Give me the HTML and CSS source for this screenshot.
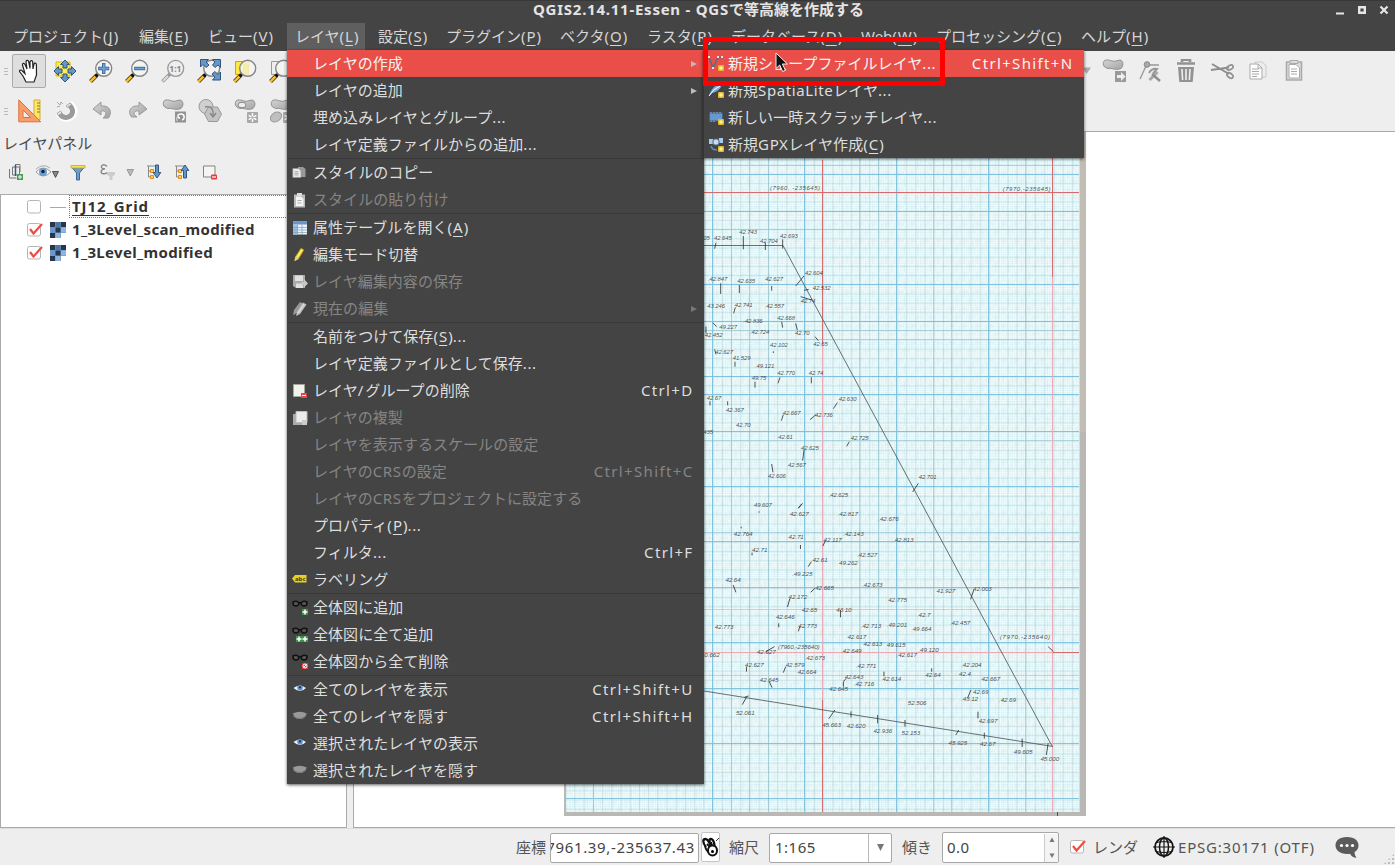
FILE: index.html
```html
<!DOCTYPE html>
<html lang="ja">
<head>
<meta charset="utf-8">
<title>QGIS2.14.11-Essen - QGSで等高線を作成する</title>
<link rel="stylesheet" href="styles.css">
</head>
<body>
<svg class="defs" width="0" height="0">
  <defs>
    <linearGradient id="grey" x1="0" y1="0" x2="1" y2="1"><stop offset="0" stop-color="#d4d4d4"/><stop offset="1" stop-color="#a4a4a4"/></linearGradient>
    <symbol id="lens" viewBox="0 0 24 24">
      <path d="M1.500 22.500L8 16" stroke="#5a4a20" stroke-width="4"/><path d="M1.500 22.500L7 17" stroke="#fbc52c" stroke-width="2.400"/>
      <path d="M6.500 17.500l3-3" stroke="#111" stroke-width="3"/>
      <circle cx="14.700" cy="9.300" r="8" fill="#f4f4f2" fill-opacity=".85" stroke="#858585" stroke-width="1.400"/>
    </symbol>
    <symbol id="blob" viewBox="0 0 24 14"><path d="M1 5C1 0 6 .5 10 2s6-1 9-.8c4 .3 4 7 1 9-3 1.500-7 1-9 .3C8 9.500 6 11 4 9.500 2 8.500 1 7 1 5z" fill="url(#grey)" stroke="#8c8c8c"/></symbol>
    <symbol id="star" viewBox="0 0 10 10"><rect width="10" height="10" rx="1" fill="#a8a8a8"/><path d="M5 1v8M1.500 3l7 4M8.500 3l-7 4" stroke="#fff" stroke-width="1.300"/><circle cx="5" cy="5" r="1.200" fill="#aaa"/></symbol>
    <symbol id="raster" viewBox="0 0 16 16"><path fill="#6d97c6" d="M0 0h16v16H0z"/><path fill="#26364d" d="M0 0h5v5H0zM11 0h5v5h-5zM5.500 5.500h5v5h-5zM0 11h5v5H0z"/><path fill="#4d74a5" d="M5.500 0h5v5h-5z"/><path fill="#8fb5df" d="M11 5.500h5v5h-5zM5.500 11h5v5h-5z"/><path fill="#fff" d="M11 11h5v5h-5z"/></symbol>
    <symbol id="glasses" viewBox="0 0 16 16"><path d="M1 2c-.5 5 5 5 6 1.500C5.500.5 3 1 1 2zM15 2c.5 5-5 5-6 1.500C10.500.5 13 1 15 2zM7 3q1-1 2 0" fill="#555" stroke="#111" stroke-width="1.500"/></symbol>
    <symbol id="eye" viewBox="0 0 16 16"><path d="M1.500 6q6-4.500 12.500 0-6 6-12.500 0z" fill="#f2f2f2"/><circle cx="8" cy="5.800" r="2.800" fill="#5c93cb"/><circle cx="8" cy="5.300" r="1.100" fill="#173050"/></symbol>
    <symbol id="lid" viewBox="0 0 16 16"><path d="M.8 4.500q7-3.500 14 0-2.500 6-7 5.500-4.500.5-7-5.500z" fill="#999"/><path d="M1 7q6 5 13 0" fill="none" stroke="#777"/></symbol>
    <symbol id="page" viewBox="0 0 16 16"><path d="M1 3h7l3 3v8H1z" fill="#ececec" stroke="#999" stroke-width=".7"/><path d="M3 7h5M3 9h5M3 11h5" stroke="#888" stroke-width=".8"/></symbol>
    <symbol id="new" viewBox="0 0 6 6"><rect width="6" height="6" rx="1" fill="#e4b92b"/><circle cx="3" cy="3" r="1.800" fill="#fff4a0"/></symbol>
    <symbol id="check" viewBox="0 0 16 16"><rect x=".5" y="1.500" width="13" height="12.500" rx="2" fill="#fff" stroke="#b5b5b5"/></symbol>
    <symbol id="tick" viewBox="0 0 16 16"><path d="M3 7l3.500 4.500L15 2" fill="none" stroke="#f04a43" stroke-width="2.200"/></symbol>
    <pattern id="fineV" width="1.840" height="50" patternUnits="userSpaceOnUse"><path d="M.5 0V50" stroke="#a9cdd2" stroke-width=".5" opacity=".3"/></pattern>
    <pattern id="fineH" width="50" height="1.840" patternUnits="userSpaceOnUse"><path d="M0 .5H50" stroke="#93e0ee" stroke-width=".5" opacity=".38"/></pattern>
    <pattern id="fiveV" x="703.500" width="9.210" height="50" patternUnits="userSpaceOnUse"><path d="M.5 0V50" stroke="#7aa2aa" stroke-width=".7" opacity=".36"/></pattern>
    <pattern id="fiveH" y="155.500" width="50" height="9.200" patternUnits="userSpaceOnUse"><path d="M0 .5H50" stroke="#6dbbd2" stroke-width=".7" opacity=".4"/></pattern>
    <pattern id="dash" width="13" height="17" patternUnits="userSpaceOnUse"><path d="M2 0v9M7.500 6v11M11 2v7M0 3h7M5 11h8" stroke="#79a9ae" stroke-width=".45" opacity=".22"/></pattern>
  </defs>
</svg>

<header class="titlebar">
  <span class="title"><span class="tl">QGIS2.14.11-Essen - QGS</span>で等高線を作成する</span>
  <svg class="winbtns" width="54" height="14"><path d="M0 12.500h8" stroke="#e6e6e6" stroke-width="2"/><path d="M23.200 6.200h5.600v5.600h-5.600z" fill="none" stroke="#e6e6e6" stroke-width="2.400"/><path d="M44.500 5.500l7 7m0-7l-7 7" stroke="#e6e6e6" stroke-width="2.200"/></svg>
</header>
<nav class="menubar">
  <span>プロジェクト(<u>J</u>)</span><span>編集(<u>E</u>)</span><span>ビュー(<u>V</u>)</span><span class="open">レイヤ(<u>L</u>)</span><span>設定(<u>S</u>)</span><span>プラグイン(<u>P</u>)</span><span>ベクタ(<u>O</u>)</span><span>ラスタ(<u>R</u>)</span><span>データベース(<u>D</u>)</span><span>Web(<u>W</u>)</span><span>プロセッシング(<u>C</u>)</span><span>ヘルプ(<u>H</u>)</span>
</nav>

<section class="toolbars">
  <div class="toolrow">
    <i class="grip"></i>
    <span class="tool pressed"><svg viewBox="0 0 24 24"><path d="M9 23l-3-6-3.300-4.200c-.6-2 1.500-2.400 2.600-.8L8 14.500 5.500 6c-.3-2 1.800-2.300 2.500-.5L10 10 9 3c0-2 2.300-2 2.700-.3L13 9.500V3c.4-1.900 2.500-1.700 2.700 0l.3 7 1-5c.5-1.500 2.400-1.200 2.400.5L19.500 16 17 23z" fill="#fff" stroke="#222" stroke-width="1.200"/></svg></span>
    <span class="tool"><svg viewBox="0 0 24 24"><path d="M3 3h14v14H3z" fill="#ffec4f" stroke="#d9b800"/><path d="M12 1l4.500 4.500H14V9h-4V5.500H7.500zM12 23l4.500-4.500H14V15h-4v3.500H7.500zM1 12l4.500-4.500V10H9v4H5.500v2.500zM23 12l-4.500-4.500V10H15v4h3.500v2.500z" fill="#6796c7" stroke="#31577f"/></svg></span>
    <span class="tool"><svg viewBox="0 0 24 24"><use href="#lens"/><path d="M14.700 4v11M9.200 9.500h11" stroke="#31577f" stroke-width="3.400"/><path d="M14.700 4.500v10M9.700 9.500h10" stroke="#6ea1d6" stroke-width="2"/></svg></span>
    <span class="tool"><svg viewBox="0 0 24 24"><use href="#lens"/><path d="M9.200 9.500h11" stroke="#31577f" stroke-width="3.400"/><path d="M9.700 9.500h10" stroke="#6ea1d6" stroke-width="2"/></svg></span>
    <span class="tool"><svg viewBox="0 0 24 24"><path d="M1.500 22.500L9 15" stroke="#999" stroke-width="3.500"/><path d="M2 22L7 17" stroke="#ddd" stroke-width="1.800"/><circle cx="14.700" cy="9.300" r="8" fill="#eee" stroke="#999" stroke-width="1.300"/><text x="8.300" y="13" class="oneone">1:1</text></svg></span>
    <span class="tool"><svg viewBox="0 0 24 24"><use href="#lens"/><path d="M3.500.5h8L9 3l3 3-3 2.500-3-3-2.500 2.500zM23.500.5v8L21 6l-3 2.500L15.500 6 18 3 15.500.5zM23.500 21h-8l2.500-3-3-3 3-2.500 3 3 2.500-2.500z" fill="#6796c7" stroke="#31577f"/></svg></span>
    <span class="tool"><svg viewBox="0 0 24 24"><path d="M2.500 2.500h13v13h-13z" fill="#ffe93d" stroke="#c8a800"/><use href="#lens"/><path d="M10 4h6v11h-6z" fill="#f3e88d" opacity=".6"/></svg></span>
    <span class="tool"><svg viewBox="0 0 24 24"><path d="M2.500 2.500h13v13h-13z" fill="#eee" stroke="#999"/><use href="#lens"/></svg></span>
    <span class="stretch"></span>
    <svg class="drop" width="10" height="8"><path d="M0 .5h9L4.500 7z" fill="#aaa"/></svg>
    <span class="tool r1"><svg viewBox="0 0 24 24"><use href="#blob" width="23" height="13"/><path d="M13 12h11v11H13z" fill="#999"/><path d="M15 16h4v-3l4.500 4.500L19 22v-3h-4z" fill="#eee"/></svg></span>
    <span class="tool r2"><svg viewBox="0 0 24 24"><path d="M2 20L8.500 6H21" fill="none" stroke="#999" stroke-width="1.300"/><circle cx="9" cy="5.500" r="2.800" fill="#aaa" stroke="#888"/><path d="M11.500 21l8-8" stroke="#a8a8a8" stroke-width="3"/><path d="M14 15l8 7" stroke="#8f8f8f" stroke-width="2.400"/><path d="M11 14q3-5 8-4l-4 4.500" fill="none" stroke="#999" stroke-width="2"/></svg></span>
    <span class="tool r3"><svg viewBox="0 0 24 24"><path d="M8 3V.8h8V3M3 4.500h18" fill="none" stroke="#929292" stroke-width="2.600"/><path d="M4 8h16l-1.300 15H5.300z" fill="#929292"/><path d="M8 10l.6 11M12 10v11M16 10l-.6 11" stroke="#efefef" stroke-width="1.600"/></svg></span>
    <span class="tool r4"><svg viewBox="0 0 24 24"><path d="M1 11l18-2.500M2 5l17 10" stroke="#8d8d8d" stroke-width="1.900"/><ellipse cx="20" cy="8.500" rx="3.400" ry="2.100" transform="rotate(-30 20 8.500)" fill="none" stroke="#929292" stroke-width="1.700"/><ellipse cx="20" cy="16.500" rx="3.400" ry="2.100" transform="rotate(35 20 16.500)" fill="none" stroke="#929292" stroke-width="1.700"/></svg></span>
    <span class="tool r5"><svg viewBox="0 0 24 24"><path d="M9 3h7l4 3.500V18H9z" fill="#eee" stroke="#c8c8c8"/><path d="M4 5h8l4 4v11H4z" fill="#fdfdfd" stroke="#aaa"/><path d="M6 10h7M6 12.500h7M6 15h7M6 17.500h5M12 5v4h4" fill="none" stroke="#aaa"/></svg></span>
    <span class="tool r6"><svg viewBox="0 0 24 24"><path d="M4.500 3h15v18h-15z" fill="#ddd" stroke="#aaa" stroke-width="1.600"/><path d="M7 5.500h7l3.500 3.500v10H7z" fill="#fff" stroke="#aaa"/><path d="M8 1.500h8v3H8z" fill="#ddd" stroke="#aaa"/><path d="M9 10h6M9 12.500h6M9 15h6" stroke="#aaa"/></svg></span>
  </div>
  <div class="toolrow">
    <i class="grip"></i>
    <span class="tool"><svg viewBox="0 0 24 24"><path d="M16 1h6v20h-6z" fill="#ffe76a" stroke="#ceae30"/><path d="M22 4h-3M22 7h-3M22 10h-3M22 13h-3" stroke="#8c7820"/><path d="M.8.8l22 22h-22zM5 11v7.500h7.500z" fill="#fb9d68" fill-rule="evenodd" stroke="#d8713d"/></svg></span>
    <span class="tool"><svg viewBox="0 0 24 24"><path d="M5 14.500c4 8 16 5 15-3.500-.5-2-2.500-4.500-4.500-6.500" fill="none" stroke="#fff" stroke-width="7"/><path d="M5.500 14.500c4 7 14 4 13-3.500-.5-2-2-4-3.500-5.500" fill="none" stroke="#9a9a9a" stroke-width="5"/><path d="M3 14.500l3.500-2.500 1.500 2-3.500 2.500zM12 7l4-3 1.500 1.500-4 3z" fill="#e8e8e8" stroke="#999" stroke-width=".8"/><path d="M3 3l3 3 1-3 2 2M3 8l3-1" fill="none" stroke="#aaa"/></svg></span>
    <span class="tool"><svg viewBox="0 0 24 24"><path d="M3 10l8-7v4c8-1 12 5 7.500 12H13c5-4 3-8-2-7v4z" fill="url(#grey)" stroke="#999"/></svg></span>
    <span class="tool"><svg viewBox="0 0 24 24"><path d="M21 10l-8-7v4C5 6 1 12 5.500 18H11c-5-3-3-7 2-6v4z" fill="url(#grey)" stroke="#999"/></svg></span>
    <span class="tool"><svg viewBox="0 0 24 24"><use href="#blob" width="23" height="13"/><path d="M13 12.500h11v11H13z" fill="#929292"/><path d="M20 21c3-1 3-6-1-6s-4 4-1 4" fill="none" stroke="#fff" stroke-width="1.500"/><path d="M15 22q-1-3 1-6" fill="none" stroke="#ddd"/></svg></span>
    <span class="tool"><svg viewBox="0 0 24 24"><circle cx="8" cy="7.500" r="7" fill="#d0d0d0" stroke="#999"/><path d="M10.500 8h9l4 7-4 7.500h-9L6.500 15z" fill="#c3c3c3" stroke="#999"/><path d="M7 8q9-2 8 9m-3-3l3 4 3-4" fill="none" stroke="#858585" stroke-width="1.300"/></svg></span>
    <span class="tool"><svg viewBox="0 0 24 24"><use href="#blob" width="23" height="13"/><ellipse cx="8" cy="6" rx="4" ry="2.800" fill="#eee" stroke="#888"/><use href="#star" x="13" y="13" width="11" height="11"/></svg></span>
    <span class="tool"><svg viewBox="0 0 24 24"><use href="#blob" width="23" height="13"/><ellipse cx="6" cy="18" rx="6" ry="4.500" transform="rotate(-35 6 18)" fill="#c0c0c0" stroke="#999"/><use href="#star" x="13" y="13" width="11" height="11"/></svg></span>
  </div>
</section>

<main class="work">
  <aside class="panel">
    <h2>レイヤパネル</h2>
    <div class="paneltools">
      <svg width="17" height="18"><path d="M1.500 6v9h7M4.500 4v8h7V4zM7 1.500h5V9" fill="none" stroke="#777"/><path d="M7.500 13V2" stroke="#2d5c86" stroke-width="1.500"/><path d="M9 11h6v6H9z" fill="#4c9a56"/><path d="M12 12v4M10 14h4" stroke="#fff"/></svg>
      <svg class="p2" width="25" height="16"><path d="M1 8q7-8 15 0-8 8-15 0z" fill="#fff" stroke="#999"/><path d="M1 5q7-6 14-1" fill="none" stroke="#aaa"/><circle cx="8" cy="8" r="4" fill="#6c9dce"/><circle cx="8" cy="7.500" r="1.700" fill="#123"/><path d="M17.500 7.500h6L20.500 13.500z" fill="#888" stroke="#555"/></svg>
      <svg class="p3" width="16" height="17"><path d="M2 3.500h12L9.500 9v7H6.500V9z" fill="#6c9dce" stroke="#41698f"/><path d="M1 1.500h14v2.500H1z" fill="#ffe14a" stroke="#b79d21" stroke-width=".7"/></svg>
      <svg class="p4" width="16" height="17"><path d="M7 2.500C4-.5 1 1 1.500 3.500q.8 1.500 3.500 1.300C1 5 0 8.500 2.500 9.500q3 .8 5-1" fill="none" stroke="#888" stroke-width="1.400"/><path d="M7 8h8v3l-2.500 1v4H9.500v-4L7 11z" fill="#ccc"/></svg>
      <svg class="p5" width="9" height="9"><path d="M1 1.500h6.500L4.300 8z" fill="#bbb" stroke="#999"/></svg>
      <svg class="p6" width="16" height="17"><path d="M1 2h9M2.500 2v11H6M2.500 7H6" fill="none" stroke="#888"/><path d="M4.500 5.500h3v3h-3zM4.500 11.500h3v3h-3z" fill="#ffd154" stroke="#dd8d1a"/><path d="M9.500 1h3v7.500h2.300L11 14 7.200 8.500h2.300z" fill="#6696c6" stroke="#31577f"/></svg>
      <svg class="p7" width="16" height="17"><path d="M1 2h9M2.500 2v11H6M2.500 7H6" fill="none" stroke="#888"/><path d="M4.500 5.500h3v3h-3zM4.500 11.500h3v3h-3z" fill="#ffd154" stroke="#dd8d1a"/><path d="M9.500 14h3V6.500h2.300L11 1 7.200 6.500h2.300z" fill="#6696c6" stroke="#31577f"/></svg>
      <svg class="p8" width="16" height="17"><path d="M1.500 2h11.500v11H1.500z" fill="#f4f4f4" stroke="#858575"/><rect x="9" y="10.500" width="6" height="5" rx="1" fill="#e23c43"/><path d="M10 13h4" stroke="#fff" stroke-width="1.200"/></svg>
    </div>
    <ul class="layers">
      <li class="current"><svg width="16" height="16"><use href="#check"/></svg><svg class="sym" width="16" height="16"><path d="M0 8h16v1H0z" fill="#f07aec"/></svg><b>TJ12_Grid</b></li>
      <li><svg width="16" height="16"><use href="#check"/><use href="#tick"/></svg><svg class="sym" width="16" height="16"><use href="#raster"/></svg><b>1_3Level_scan_modified</b></li>
      <li><svg width="16" height="16"><use href="#check"/><use href="#tick"/></svg><svg class="sym" width="16" height="16"><use href="#raster"/></svg><b>1_3Level_modified</b></li>
    </ul>
  </aside>
  <section class="canvas">
    <svg class="scan" width="522" height="684" viewBox="564 132 522 684">
      <path d="M564 132h522v684H564z" fill="#b9b8b4"/>
      <path d="M1080 132h6v300h-6z" fill="#c2bdb4"/>
      <path d="M566 132h513.500v680H566z" fill="#f7fefe"/>
      <g>
        <path d="M566 132h513v680H566z" fill="url(#fineV)"/><path d="M566 132h513v680H566z" fill="url(#fineH)"/>
        <path d="M566 132h513v680H566z" fill="url(#fiveV)"/><path d="M566 132h513v680H566z" fill="url(#fiveH)"/>
        <path d="M566 132h513v680H566z" fill="url(#dash)"/>
      </g>
      <path d="M566 174.500h513M566 211.500h513M566 284.500h513M566 321.500h513M566 376.500h513M566 394.500h513M566 431.500h513M566 486.500h513M566 541.500h513M566 587.500h513M566 642.500h513M566 688.500h513M566 743.500h513M566 798.500h513M712.500 132v680M804.500 132v680M896.500 132v680M988.500 132v680" stroke="#6db9dc" opacity=".8"/>
      <path d="M566 165.500h513M566 229.500h513M566 330.500h513M566 339.500h513M566 440.500h513M566 532.500h513M566 609.500h513M566 675.500h513M731.500 132v680M749.500 132v680M768.500 132v680M859.500 132v680M878.500 132v680M933.500 132v680M951.500 132v680M1025.500 132v680" stroke="#79b3c4" opacity=".45"/>
      <path d="M566 192.500h513M822.500 160v184M1052.500 132v145M1052 652.500h27M822.500 700v112" stroke="#d66b70"/>
      <path d="M566 652.500h486M822.500 344v356M1052.500 277v535M593.500 784v28" stroke="#efabb5"/>
      <path d="M704 245.500h79L1052 746M704 691l349 55.500" fill="none" stroke="#50585a" stroke-width=".85"/>
      <g class="hand" transform="translate(700 160) scale(.33333)">
        <path d="M48 248l-4 18M130 228v40M196 248v22M248 238v28M312 348l-25 30M326 388l-14 3M335 420l-33-10M62 370v32M118 375v24M215 378v14M106 442l-5 18M245 485l3 18M38 488l12 12M287 490l5 20M345 530l10 12M44 568l4 15M105 605v15M220 574v5M165 665v18M240 652l-6 18M334 652v18M30 724v12M83 724v12M250 764l-6 18M348 764l-18 15M412 728l-12 18M312 870l-4 32M448 845l-8 14M215 912l4 25M305 1032l-10 12M655 970l-17 26M18 500v20"/>
        <text x="210" y="90" class="wide">(7960, -235645)</text><text x="908" y="92" class="wide">(7970,-235645)</text>
        <text x="10" y="240">05</text><text x="42" y="240">42.645</text><text x="118" y="222">42.743</text><text x="180" y="250">42.704</text><text x="240" y="234">42.693</text><text x="315" y="346">42.604</text><text x="338" y="390">42.532</text><text x="302" y="428">42.74</text><text x="24" y="362">.42.847</text><text x="112" y="368">42.635</text><text x="196" y="364">42.627</text><text x="22" y="444">43.246</text><text x="104" y="440">42.741</text><text x="194" y="445">.42.557</text><text x="130" y="488">.42.836</text><text x="232" y="480">42.668</text><text x="58" y="506">49.227</text><text x="150" y="522">.42.724</text><text x="285" y="524">42.70</text><text x="14" y="532">42.452</text><text x="340" y="557">42.65</text><text x="210" y="560">42.102</text><text x="46" y="583">42.627</text><text x="98" y="600">41.529</text><text x="165" y="624">.49.121</text><text x="232" y="646">42.770</text><text x="326" y="645">42.74</text><text x="155" y="660">49.75</text><text x="20" y="720">42.67</text><text x="78" y="755">42.367</text><text x="248" y="764">42.667</text><text x="345" y="770">42.736</text><text x="416" y="722">42.630</text><text x="108" y="800">42.70</text><text x="10" y="822">435</text><text x="230" y="837">.42.61</text><text x="452" y="840">42.725</text><text x="303" y="870">42.625</text><text x="264" y="922">42.567</text><text x="204" y="955">42.606</text><text x="656" y="957">42.701</text><text x="386" y="1012">.42.625</text><text x="162" y="1040">49.607</text>
      </g>
      <g class="hand" transform="translate(550 500) scale(.3508 .3333)">
        <path d="M720 10l-12 15M596 34v4M545 80v5M714 135v12M785 122l-7 16M576 158v8M745 185l-9 15M522 255l8 22M755 265l-12 12M684 295l-7 26M828 330v22M652 370v12M712 380l-4 14M1208 270l-9 28M1420 440l15 15M640 440l-25 15M560 500v15M672 500l-7 18M845 535q-12 8-8 25M952 515v14M625 545l8 18M560 592l-12 22M566 588l-12 4M812 630l-17 26M858 634v18M934 645v25M1012 660v20M1165 690l-8 15M1238 698v18M1346 716v25M1420 730l-5 35M1220 635v20M1088 505v10M1200 570l-10 25"/>
        <text x="684" y="48">42.627</text><text x="820" y="48">.42.817</text><text x="936" y="63">.42.676</text><text x="524" y="108">42.764</text><text x="680" y="117">42.71</text><text x="780" y="127">42.117</text><text x="836" y="108">.42.143</text><text x="978" y="126">.42.813</text><text x="576" y="157">42.71</text><text x="875" y="170">.42.527</text><text x="748" y="187">42.61</text><text x="824" y="195">49.262</text><text x="690" y="228">.49.225</text><text x="500" y="245">42.64</text><text x="756" y="270">42.665</text><text x="890" y="260">.42.673</text><text x="1102" y="280">41.927</text><text x="1206" y="274">42.003</text><text x="680" y="298">42.172</text><text x="964" y="307">42.775</text><text x="718" y="335">42.65</text><text x="816" y="337">43.10</text><text x="644" y="358">42.646</text><text x="1046" y="350">.42.7</text><text x="1140" y="376">.42.457</text><text x="470" y="387">42.773</text><text x="708" y="383">42.773</text><text x="886" y="383">.42.713</text><text x="960" y="382">.49.201</text><text x="1034" y="392">49.664</text><text x="1282" y="416" class="wide">(7970,-235640)</text><text x="848" y="418">42.617</text><text x="894" y="437">42.613</text><text x="960" y="440">49.615</text><text x="650" y="448">(7960,-235640)</text><text x="830" y="458">.42.649</text><text x="1050" y="455">.49.120</text><text x="440" y="470">0.662</text><text x="590" y="462">42.627</text><text x="726" y="479">.42.673</text><text x="988" y="472">.42.617</text><text x="556" y="502">42.627</text><text x="672" y="500">42.579</text><text x="706" y="523">42.664</text><text x="872" y="503">.42.771</text><text x="1172" y="500">.42.204</text><text x="1070" y="530">42.64</text><text x="1166" y="528">42.4</text><text x="1230" y="544">42.667</text><text x="598" y="546">42.645</text><text x="840" y="538">42.643</text><text x="948" y="542">42.614</text><text x="866" y="557">.42.716</text><text x="796" y="574">42.645</text><text x="1206" y="583">42.69</text><text x="1172" y="602">.43.12</text><text x="1280" y="606">.42.69</text><text x="1020" y="614">52.506</text><text x="530" y="645">52.061</text><text x="1222" y="670">42.697</text><text x="776" y="680">45.663</text><text x="846" y="684">42.620</text><text x="922" y="700">42.936</text><text x="1002" y="704">52.153</text><text x="1136" y="735">45.925</text><text x="1226" y="738">42.67</text><text x="1322" y="762">49.605</text><text x="1398" y="782">45.000</text>
      </g>
      <path d="M1057.500 812v4" stroke="#8a3940"/>
    </svg>
  </section>
</main>

<footer class="status">
  <label class="s1">座標</label><span class="field coord"><span>7961.39,-235637.43</span></span>
  <span class="mouse"><svg width="17" height="27"><path d="M4 14C0 9 1 6 3.500 6s4 4 5.500 7C6.500 8 7.500 5 9.500 6s3 4 3 8" fill="#fff" stroke="#111" stroke-width="2.300"/><path d="M3 13q1 5 5 7M5 11l3 3M9 9l1 3" fill="none" stroke="#111" stroke-width="1.800"/><ellipse cx="10.500" cy="17.500" rx="4.500" ry="5" fill="#fff" stroke="#111" stroke-width="2"/><circle cx="10.500" cy="18.500" r="1.500"/><path d="M14 8l3-3" stroke="#333"/></svg></span>
  <label class="s2">縮尺</label><span class="field scale"><span>1:165</span><i><svg width="9" height="9"><path d="M1 1h7L4.500 8z" fill="#777"/></svg></i></span>
  <label class="s3">傾き</label><span class="field spin"><span>0.0</span><i><svg width="10" height="22"><path d="M2.500 5h5L5 .5zM2.500 16.500h5L5 21z" fill="#777"/></svg></i></span>
  <svg class="rendercheck" width="16" height="16"><use href="#check"/><use href="#tick"/></svg><label class="s4">レンダ</label>
  <svg class="globe" width="22" height="22" fill="none" stroke="#151515"><circle cx="11" cy="11" r="9" stroke-width="1.800"/><ellipse cx="11" cy="11" rx="4.500" ry="9" stroke-width="1.500"/><path d="M0 11h22M11 0v22M3.500 6.500q7.500-2 15 0M3.500 15.500q7.500 2 15 0" stroke-width="1.200"/></svg>
  <span class="crs">EPSG:30171 (OTF)</span>
  <svg class="bubble" width="24" height="23"><path d="M12 1C4 1 .5 5 .5 9.500S5 18 12 18c1 0 2 0 3-.3q2 4 6.500 4-2-2-2-5.500 4-2.700 4-6.700C23.500 5 20 1 12 1z" fill="#5b5b5b"/><circle cx="6.500" cy="9.500" r="1.600" fill="#fff"/><circle cx="12" cy="9.500" r="1.600" fill="#fff"/><circle cx="17.500" cy="9.500" r="1.600" fill="#fff"/></svg>
  <i class="sizegrip"></i>
</footer>

<div class="menu layermenu">
  <div class="item hot"><i></i><span>レイヤの作成</span><b class="sub"></b></div>
  <div class="item"><i></i><span>レイヤの追加</span><b class="sub"></b></div>
  <div class="item"><i></i><span>埋め込みレイヤとグループ<em>...</em></span></div>
  <div class="item"><i></i><span>レイヤ定義ファイルからの追加<em>...</em></span></div>
  <hr>
  <div class="item"><i><svg viewBox="0 0 16 16"><path d="M6 2h5l2.500 2v8H6z" fill="#999"/><use href="#page" width="13" height="15"/></svg></i><span>スタイルのコピー</span></div>
  <div class="item off"><i><svg viewBox="0 0 16 16"><path d="M2 2.500h11v13H2z" fill="#bbb"/><path d="M4 4.500h5l2.500 2.500v7H4z" fill="#f4f4f4"/><path d="M5 1h5v3H5z" fill="#ddd"/><path d="M5.500 8.500h4M5.500 11h4" stroke="#aaa"/></svg></i><span>スタイルの貼り付け</span></div>
  <hr>
  <div class="item"><i><svg viewBox="0 0 16 16"><path d="M1 1.500h14v13H1z" fill="#eef3f7"/><path d="M1 1.500h14v3H1z" fill="#6597cc"/><path d="M1 4.500h4.500v10H1z" fill="#9dc0e3"/><path d="M1 7.500h14M1 10h14M1 12.500h14M5.500 4.500v10M10 4.500v10" stroke="#7c9dbb" stroke-width=".7"/></svg></i><span>属性テーブルを開く(<u>A</u>)</span></div>
  <div class="item"><i><svg viewBox="0 0 16 16"><path d="M2.500 14l1-4.500L9 1l3 2-5.500 9z" fill="#f0d43c" stroke="#947c17" stroke-width=".6"/><path d="M2.500 14l1-4.500 3 2.500z" fill="#d7d0b0"/><path d="M5.500 10L10 2.500" stroke="#fff6a0"/></svg></i><span>編集モード切替</span></div>
  <div class="item off"><i><svg viewBox="0 0 16 16"><path d="M1 1h12v13H4l-3-2z" fill="#aaa"/><path d="M3 1.500h8v5.500H3zM4 9.500h7V14H4z" fill="#e0e0e0"/><path d="M9 8h3V5l4 4.500-4 4V11H9z" fill="#c8c8c8"/></svg></i><span>レイヤ編集内容の保存</span></div>
  <div class="item off"><i><svg viewBox="0 0 16 16"><path d="M1 14l1-5L8 1l3 1.500L5 12z" fill="#999"/><path d="M4 15l1-4 6-9.500 3.500 2L8 13z" fill="#c1c1c1"/><path d="M6 12l6-9" stroke="#eee" stroke-width=".8"/></svg></i><span>現在の編集</span><b class="sub"></b></div>
  <hr>
  <div class="item"><i></i><span>名前をつけて保存(<u>S</u>)<em>...</em></span></div>
  <div class="item"><i></i><span>レイヤ定義ファイルとして保存<em>...</em></span></div>
  <div class="item"><i><svg viewBox="0 0 16 16"><path d="M1.500 1.500h11v12h-11z" fill="#f2f2ec" stroke="#a5a59a"/><path d="M9 10h6v5H9z" fill="#e7434a"/><path d="M10 12.500h4" stroke="#fff"/></svg></i><span>レイヤ/<span class="sl"></span>グループの削除</span><kbd>Ctrl+D</kbd></div>
  <div class="item off"><i><svg viewBox="0 0 16 16"><path d="M1 4h11v11H1z" fill="#aaa"/><path d="M4 1.500h11v11H4z" fill="#ececec" stroke="#bbb"/><path d="M10 10h5v5h-5z" fill="#ccc"/></svg></i><span>レイヤの複製</span></div>
  <div class="item off"><i></i><span>レイヤを表示するスケールの設定</span></div>
  <div class="item off"><i></i><span>レイヤの<em>CRS</em>の設定</span><kbd>Ctrl+Shift+C</kbd></div>
  <div class="item off"><i></i><span>レイヤの<em>CRS</em>をプロジェクトに設定する</span></div>
  <div class="item"><i></i><span>プロパティ(<u>P</u>)<em>...</em></span></div>
  <div class="item"><i></i><span>フィルタ<em>...</em></span><kbd>Ctrl+F</kbd></div>
  <div class="item"><i><svg viewBox="0 0 16 16"><path d="M0 6.500L3 3h11.500v7.500H3z" fill="#e9cd28"/><text x="3" y="9" class="abc">abc</text></svg></i><span>ラベリング</span></div>
  <hr>
  <div class="item"><i><svg viewBox="0 0 16 16"><use href="#glasses"/><path d="M10 9h6v6h-6z" fill="#3d9449"/><path d="M13 9.500v5M10.500 12h5" stroke="#fff" stroke-width="1.500"/></svg></i><span>全体図に追加</span></div>
  <div class="item"><i><svg viewBox="0 0 16 16"><use href="#glasses"/><path d="M4 9h12v6H4z" fill="#3d9449"/><path d="M13 9.500v5M10.500 12h5M7 9.500v5M4.500 12h5" stroke="#fff" stroke-width="1.500"/></svg></i><span>全体図に全て追加</span></div>
  <div class="item"><i><svg viewBox="0 0 16 16"><use href="#glasses"/><path d="M10 9h6v6h-6z" fill="#e33"/><circle cx="13" cy="12" r="2" fill="none" stroke="#fff"/><path d="M11.500 13.500l3-3" stroke="#fff"/></svg></i><span>全体図から全て削除</span></div>
  <hr>
  <div class="item"><i><svg viewBox="0 0 16 16"><use href="#eye"/></svg></i><span>全てのレイヤを表示</span><kbd>Ctrl+Shift+U</kbd></div>
  <div class="item"><i><svg viewBox="0 0 16 16"><use href="#lid"/></svg></i><span>全てのレイヤを隠す</span><kbd>Ctrl+Shift+H</kbd></div>
  <div class="item"><i><svg viewBox="0 0 16 16"><use href="#eye"/></svg></i><span>選択されたレイヤの表示</span></div>
  <div class="item"><i><svg viewBox="0 0 16 16"><use href="#lid"/></svg></i><span>選択されたレイヤを隠す</span></div>
</div>

<div class="menu submenu">
  <div class="item hot"><i><svg viewBox="0 0 16 16"><path d="M1 1l4 11 5-10.500h5" fill="none" stroke="#5a6d80" stroke-width="1.500"/><path d="M0 0h2v2H0zM4 11h2v2H4zM9 0h2v2H9zM13 0h2v2h-2z" fill="#dbe4ec"/><use href="#new" x="10" y="9" width="6" height="6"/></svg></i><span>新規シェープファイルレイヤ<em>...</em></span><kbd>Ctrl+Shift+N</kbd></div>
  <div class="item"><i><svg viewBox="0 0 16 16"><path d="M1 13C3 6 7 1 14 1c-1 5-5 8-10 9z" fill="#79a9dc"/><path d="M1 13Q5 6 12 3" fill="none" stroke="#fff"/><use href="#new" x="10" y="9" width="6" height="6"/></svg></i><span>新規<em>SpatiaLite</em>レイヤ<em>...</em></span></div>
  <div class="item"><i><svg viewBox="0 0 16 16"><path d="M1.500 3h13v8h-13z" fill="#6998cd" stroke="#3d638d"/><path d="M3 2v1M6 2v1M9 2v1M12 2v1M3 12v-1M6 12v-1" stroke="#9bc2ea"/><use href="#new" x="10" y="9" width="6" height="6"/></svg></i><span>新しい一時スクラッチレイヤ<em>...</em></span></div>
  <div class="item"><i><svg viewBox="0 0 16 16"><path d="M1 2h4v5H1zM11 1h4v5h-4z" fill="#a9cbed"/><rect x="5" y="2" width="6" height="6" rx="2" fill="#cfdae7" stroke="#45698e"/><path d="M3 9q1 4 6 4" fill="none" stroke="#5c8cc1" stroke-width="1.500"/><use href="#new" x="10" y="9" width="6" height="6"/></svg></i><span>新規<em>GPX</em>レイヤ作成(<u>C</u>)</span></div>
</div>

<div class="callout"></div>
<svg class="cursor" width="14" height="21"><path d="M1 1v15.500l3.700-3.500 3 6.500 2.700-1.200-3-6.300h5z" fill="#111" stroke="#eee"/></svg>
</body>
</html>
```
FILE: styles.css
```css
* { box-sizing: border-box; }
body {
  margin: 0; width: 1395px; height: 865px; overflow: hidden;
  display: flex; flex-direction: column; position: relative;
  background: #eee; color: #4a4a4a;
  font: 15px/27px "Noto Sans", "Noto Sans CJK JP", sans-serif;
  white-space: nowrap;
}
svg { display: block; flex: none; }
.defs { position: absolute; }
u { text-underline-offset: 3px; text-decoration-thickness: 1px; margin: 0 1px; }
em { font-style: normal; letter-spacing: .6px; }

.titlebar { height: 23px; background: #444; border-top: 1px solid #383838; display: flex; color: #e4e4e4; }
.title { margin-left: 533px; line-height: 16px; font-weight: 700; }
.tl { letter-spacing: .75px; }
.winbtns { margin-left: auto; margin-right: 5px; }

.menubar {
  height: 28px; background: #444; color: #d6d6d6; padding-left: 5px; display: grid;
  grid-template-columns: 126px 69px 87px 83px 68px 114px 87px 84px 130px 75px 145px auto;
}
.menubar span { padding-left: 8px; line-height: 26px; }
.menubar .open { background: #5f5f5f; width: 78px; }

.toolbars { height: 80px; }
.toolrow { height: 40px; display: flex; align-items: center; padding-left: 4px; overflow: hidden; }
.grip { width: 4px; height: 7px; margin-right: 4px; border-top: 1px solid #bbb; border-bottom: 1px solid #bbb; background: linear-gradient(#eee 2px, #bbb 2px, #bbb 3px, #eee 3px); }
.tool { width: 36px; height: 34px; flex: none; display: flex; align-items: center; justify-content: center; }
.tool svg { width: 24px; height: 24px; }
.pressed { background: #dedede; border: 1px solid #ababab; border-radius: 2px; width: 34px; margin-right: 1px; }
.oneone { font: 700 8.500px "Noto Sans", sans-serif; fill: #888; }
.stretch { width: 783px; }
.drop { margin-right: 10px; }
.r1, .r2, .r3, .r4, .r5, .r6 { width: 24px; }
.r2, .r3, .r4, .r5 { margin-left: 12px; }
.r6 { margin-left: 12px; }

.work { height: 697px; display: flex; }
.panel { width: 347px; display: flex; flex-direction: column; }
.panel h2 { margin: 0; padding-left: 3px; height: 27px; line-height: 25px; font-size: 15px; font-weight: 400; }
.paneltools { height: 36px; display: flex; align-items: center; padding: 0 0 8px 8px; }
.p2 { margin-left: 10px; } .p3 { margin-left: 10px; } .p4 { margin-left: 14px; }
.p5 { margin-left: 10px; } .p6 { margin-left: 11px; } .p7 { margin-left: 12px; } .p8 { margin-left: 12px; }
.layers { flex: 1; margin: 0; padding: 0; list-style: none; background: #fff; border: 1px solid #aaa; }
.layers li { height: 23px; display: flex; align-items: center; padding-left: 26px; }
.sym { margin-left: 7px; }
.layers b { margin-left: 3px; padding-left: 3px; color: #333; line-height: 21px; letter-spacing: .34px; }
.layers .current b { flex: 1; height: 23px; border: 1px dotted #777; border-right: 0; text-decoration: underline; text-underline-offset: 3px; padding-left: 2px; letter-spacing: .95px; line-height: 20px; }
.canvas { margin-left: 6px; flex: 1; background: #fff; border: 1px solid #aaa; border-right: 0; }
.scan { margin-left: 210px; }
.hand { font: italic 18px "Liberation Sans", sans-serif; fill: #3c3c3c; stroke: #333; stroke-width: 2.500; fill-opacity: .9; }
.hand path { fill: none; }
.hand text { stroke: none; letter-spacing: -.3px; }
.hand .wide { letter-spacing: 1.600px; }

.status { height: 37px; display: flex; align-items: center; border-top: 1px solid #ddd; color: #555; }
.s1, .s2, .s3, .s4, .crs { line-height: 26px; padding-bottom: 1px; }
.s1 { margin-left: 516px; width: 34px; }
.field { height: 30px; background: #fff; border: 1px solid #a8a8a8; border-radius: 2px; display: flex; align-items: center; color: #444; margin-top: 1px; }
.coord { width: 149px; justify-content: flex-end; overflow: hidden; padding-right: 3px; }
.coord span { letter-spacing: .65px; }
.mouse { width: 19px; height: 30px; margin-left: 2px; background: #fff; border: 1px solid #c4c4c4; border-radius: 2px; }
.s2 { margin-left: 9px; width: 40px; }
.scale { width: 123px; padding-left: 5px; justify-content: space-between; letter-spacing: .5px; }
.scale i { width: 23px; height: 28px; border-left: 1px solid #bbb; display: flex; align-items: center; justify-content: center; }
.s3 { margin-left: 10px; width: 40px; }
.spin { width: 117px; height: 31px; padding-left: 4px; justify-content: space-between; letter-spacing: .5px; }
.spin i { width: 14px; height: 28px; border-left: 1px solid #ccc; background: #f4f4f4; display: flex; align-items: center; justify-content: center; }
.rendercheck { margin-left: 11px; }
.s4 { margin-left: 7px; width: 60px; }
.crs { margin-left: 3px; width: 157px; letter-spacing: .8px; }
.sizegrip { margin: auto 0 0 auto; width: 12px; height: 12px; background: radial-gradient(circle, #bbb 35%, transparent 40%) 0 0 / 4px 4px; clip-path: polygon(100% 0, 100% 100%, 0 100%); }

.menu { position: absolute; top: 50px; background: #444; color: #dedede; box-shadow: 0 1px 3px rgba(0,0,0,.65); }
.layermenu { left: 287px; width: 417px; }
.submenu { left: 703px; width: 381px; border-left: 1px solid #363636; }
.menu hr { height: 1px; margin: 0; border: 0; background: #393939; }
.item { height: 27px; display: flex; align-items: center; padding: 0 11px 0 5px; }
.item > span { letter-spacing: .05px; }
.submenu .item { padding-left: 4px; }
.item > i { width: 21px; flex: none; }
.item > i svg { width: 16px; height: 16px; }
.submenu .item > i { width: 20px; }
.sl { padding-left: 2px; }
.hot { background: #e94f48; color: #f4f4f4; }
.off { color: #858585; }
.item kbd { margin-left: auto; font: inherit; letter-spacing: 1.350px; margin-right: -.5px; }
.sub { margin-left: auto; margin-right: -4px; border: 3px solid transparent; border-left: 6px solid #bbb; border-right: 0; }
.off .sub { border-left-color: #777; }
.abc { font: 700 6px "Noto Sans", sans-serif; fill: #443c10; }
.callout { position: absolute; left: 703px; top: 37px; width: 242px; height: 49px; border: 5px solid #f00; }
.cursor { position: absolute; left: 775px; top: 52px; }
```
